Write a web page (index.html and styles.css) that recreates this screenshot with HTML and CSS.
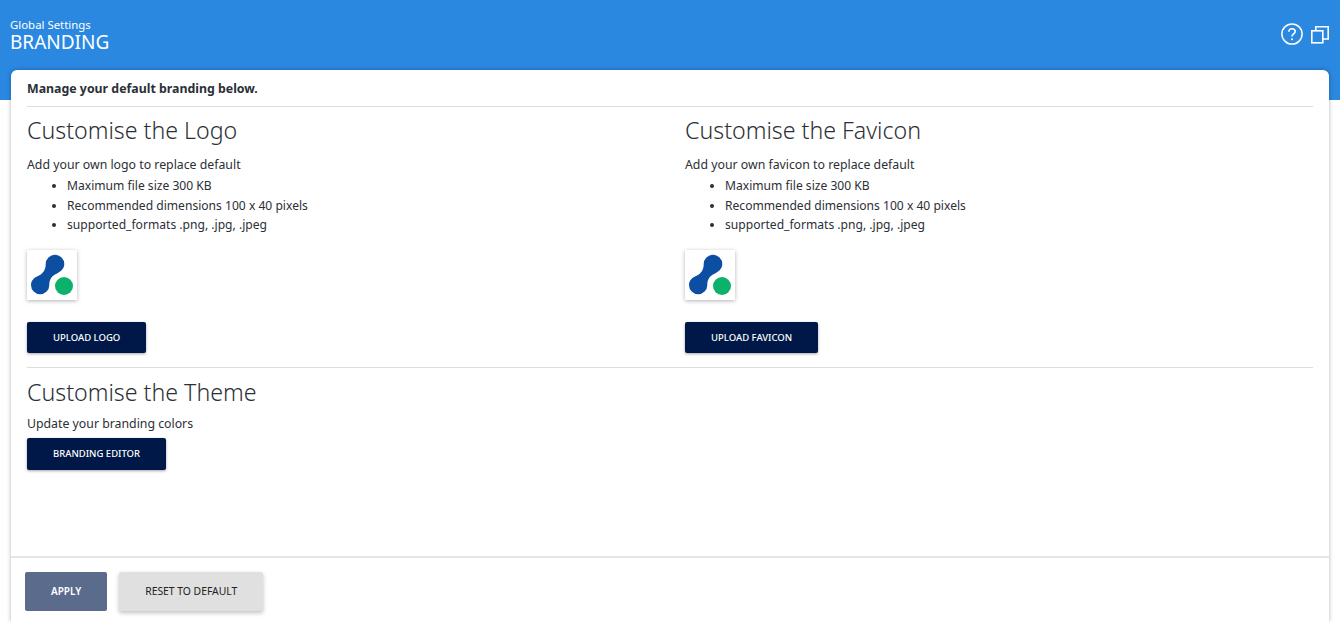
FILE: index.html
```html
<!DOCTYPE html>
<html lang="en">
<head>
<meta charset="utf-8">
<title>Branding</title>
<link rel="stylesheet" href="styles.css">
</head>
<body>
<header class="topbar">
  <div class="titles">
    <div class="crumb">Global Settings</div>
    <div class="title">BRANDING</div>
  </div>
  <div class="top-icons">
    <svg class="icon-help" width="22" height="22" viewBox="0 0 22 22" fill="none" stroke="#fff">
      <circle cx="11" cy="11" r="10.100" stroke-width="1.5"/>
      <path d="M7.800 8.700c0-1.900 1.400-3 3.200-3s3.200 1.100 3.200 2.800c0 2.400-3.200 2.500-3.200 5" stroke-width="1.600"/>
      <circle cx="11" cy="16.300" r="1" fill="#fff" stroke="none"/>
    </svg>
    <svg class="icon-copy" width="18" height="18" viewBox="0 0 18 18" fill="none" stroke="#fff" stroke-width="1.600">
      <rect x="0.800" y="4.800" width="11" height="12"/>
      <path d="M4.800 4.800V0.800h12.400V13h-5.400"/>
    </svg>
  </div>
</header>
<main class="card">
  <div class="scroll">
    <p class="intro">Manage your default branding below.</p>
    <div class="cols">
      <section class="col">
        <h2>Customise the Logo</h2>
        <p class="desc">Add your own logo to replace default</p>
        <ul>
          <li>Maximum file size 300 KB</li>
          <li>Recommended dimensions 100 x 40 pixels</li>
          <li>supported_formats .png, .jpg, .jpeg</li>
        </ul>
        <div class="thumb">
          <svg width="50" height="50" viewBox="0 0 50 50"><path d="M28 4.700A9.300 9.300 0 0 1 37.300 14C37.300 19 33 22 29 24C25 26 22.300 29 22.300 35A9.150 9.150 0 0 1 4 35C4 30 8 27 12 25.500C16 23.500 18.700 20 18.700 14A9.300 9.300 0 0 1 28 4.700Z" fill="#0b4ea2"/><circle cx="37" cy="36" r="9" fill="#0cb26c"/></svg>
        </div>
        <button class="btn dark">UPLOAD LOGO</button>
      </section>
      <section class="col">
        <h2>Customise the Favicon</h2>
        <p class="desc">Add your own favicon to replace default</p>
        <ul>
          <li>Maximum file size 300 KB</li>
          <li>Recommended dimensions 100 x 40 pixels</li>
          <li>supported_formats .png, .jpg, .jpeg</li>
        </ul>
        <div class="thumb">
          <svg width="50" height="50" viewBox="0 0 50 50"><path d="M28 4.700A9.300 9.300 0 0 1 37.300 14C37.300 19 33 22 29 24C25 26 22.300 29 22.300 35A9.150 9.150 0 0 1 4 35C4 30 8 27 12 25.500C16 23.500 18.700 20 18.700 14A9.300 9.300 0 0 1 28 4.700Z" fill="#0b4ea2"/><circle cx="37" cy="36" r="9" fill="#0cb26c"/></svg>
        </div>
        <button class="btn dark">UPLOAD FAVICON</button>
      </section>
    </div>
    <section class="theme">
      <h2>Customise the Theme</h2>
      <p class="desc">Update your branding colors</p>
      <button class="btn dark">BRANDING EDITOR</button>
    </section>
  </div>
  <footer class="actions">
    <button class="btn apply">APPLY</button>
    <button class="btn reset">RESET TO DEFAULT</button>
  </footer>
</main>
</body>
</html>
```
FILE: styles.css
```css
html, body { margin: 0; height: 622px; overflow: hidden; background: #fff; }
body { font-family: "Noto Sans", "Open Sans", sans-serif; color: #2b2f36; font-size: 12.100px; }
.topbar { background: #2a88e0; height: 100px; box-sizing: border-box; padding: 18px 11px 0 10px; display: flex; justify-content: space-between; color: #fff; }
.crumb { font-size: 11.400px; line-height: 14px; }
.title { font-size: 19px; line-height: 20px; }
.top-icons { display: flex; gap: 8px; align-items: flex-start; padding-top: 5px; }
.icon-copy { margin-top: 3px; }
.card { margin: -30px 11px 0; height: 552px; background: #fff; border-radius: 6px 6px 0 0; box-shadow: 0 0 4px rgba(0,0,0,.3); display: flex; flex-direction: column; }
.scroll { flex: none; height: 488px; box-sizing: border-box; padding: 0 16px; border-bottom: 2px solid #e2e6ea; }
.intro { margin: 0; height: 36px; line-height: 37px; font-weight: 700; font-size: 12.350px; border-bottom: 1px solid #ddd; }
.cols { display: grid; grid-template-columns: 658px 1fr; height: 260px; border-bottom: 1px solid #ddd; }
h2 { margin: 0; font-weight: 300; font-size: 23.200px; line-height: 30px; padding-top: 8px; }
.desc { margin: 11px 0 0; line-height: 18px; font-size: 12.300px; }
ul { margin: 2px 0 0; padding-left: 40px; }
li { line-height: 19.500px; }
.thumb { margin-top: 15px; width: 50px; height: 50px; box-shadow: 0 1px 4px rgba(0,0,0,.3); }
.thumb svg { display: block; }
.btn { display: block; border: 0; border-radius: 2px; font-family: "Noto Sans", sans-serif; font-size: 9.500px; padding: 0 26px; height: 31px; }
.col .btn { margin-top: 22px; }
.dark { background: #001847; color: #fff; font-weight: 500; box-shadow: 0 1px 3px rgba(0,0,0,.35); }
.theme h2 { padding-top: 9px; }
.theme .desc { margin-top: 8px; }
.theme .btn { margin-top: 5px; height: 32px; padding-bottom: 2px; }
.actions { display: flex; gap: 12px; padding: 14px 14px; }
.apply { background: #5a6b8c; color: #fff; height: 39px; font-size: 10px; font-weight: 600; padding-bottom: 2px; }
.reset { background: #e0e0e0; color: #222; height: 39px; font-size: 10.350px; padding-bottom: 2px; box-shadow: 0 2px 4px rgba(0,0,0,.25); }
```
